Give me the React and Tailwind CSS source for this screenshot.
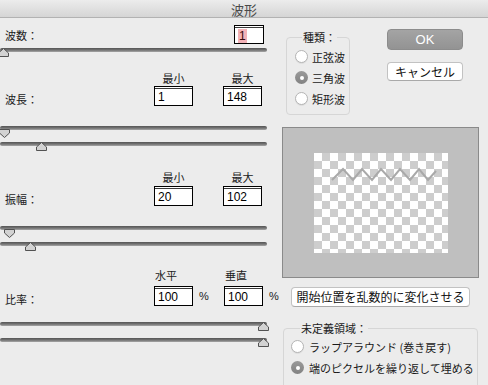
import React from "react";

const jp = "font-['Noto_Sans_CJK_JP',sans-serif]";
const num = "font-['Liberation_Sans',sans-serif]";

function Thumb({ dir, pos }) {
  return (
    <svg
      width="11"
      height="9"
      viewBox="0 0 11 9"
      className={`absolute ${dir === "up" ? "top-[0px]" : "top-[3px]"} ${pos}`}
    >
      {dir === "up" ? (
        <path d="M5.5 0.5 L10.5 5 V8.5 H0.5 V5 Z" fill="#d2d2d2" stroke="#525252" />
      ) : (
        <path d="M0.5 0.5 H10.5 V4 L5.5 8.5 L0.5 4 Z" fill="#d2d2d2" stroke="#525252" />
      )}
    </svg>
  );
}

function Slider({ dir, pos, className = "" }) {
  return (
    <div className={`relative h-[12px] w-[268px] ${className}`}>
      <div className="mt-[4px] h-[4px] w-[267px] rounded-full bg-linear-to-b from-[#555] via-[#727272] to-[#a8a8a8]" />
      <Thumb dir={dir} pos={pos} />
    </div>
  );
}

function Field({ children, className = "" }) {
  return (
    <div
      className={`flex shrink-0 items-center border border-black bg-white pl-[3px] pt-[2px] text-[12px] leading-none text-black shadow-[inset_0_1px_0_#fff,inset_0_2px_0_#3c3c3c] ${num} ${className}`}
    >
      {children}
    </div>
  );
}

function Radio({ checked, label, className = "" }) {
  return (
    <div className={`flex h-[21px] items-center gap-[4px] ${className}`}>
      {checked ? (
        <div className="flex h-[13px] w-[13px] shrink-0 items-center justify-center rounded-full bg-linear-to-b from-[#9a9a9a] to-[#828282]">
          <div className="h-[4px] w-[4px] rounded-full bg-white" />
        </div>
      ) : (
        <div className="h-[13px] w-[13px] shrink-0 rounded-full border border-[#b4b4b4] bg-white shadow-[0_1px_0_rgba(0,0,0,0.06)]" />
      )}
      <span className="whitespace-nowrap text-[11px] leading-[14px] text-[#1a1a1a]">{label}</span>
    </div>
  );
}

function MinMax({ a, b }) {
  return (
    <div className="flex h-[14px] text-[11px] leading-[14px] text-[#1a1a1a]">
      <div className="w-[154px] shrink-0" />
      <div className="w-[39px] shrink-0 text-center">{a}</div>
      <div className="w-[30px] shrink-0" />
      <div className="w-[39px] shrink-0 text-center">{b}</div>
    </div>
  );
}

function Checker() {
  return (
    <div className="h-[100px] w-[134px] bg-[conic-gradient(#cdcdcd_25%,#ffffff_0_50%,#cdcdcd_0_75%,#ffffff_0)] bg-[length:16px_16px]">
      <svg width="134" height="100" viewBox="0 0 134 100">
        <polyline
          points="18,27 29,16 39,27 48,16 58,27 67,16 77,27 86,16 96,27 105,16 114,27 122,18"
          fill="none"
          stroke="#a9a9a9"
          strokeWidth="2"
        />
      </svg>
    </div>
  );
}

export default function App() {
  return (
    <div className={`h-[385px] w-[488px] overflow-hidden bg-[#ececec] ${jp}`}>
      {/* title bar */}
      <div className="flex h-[18px] items-center justify-center border-b border-[#b2b2b2] bg-linear-to-b from-[#ececec] to-[#d5d5d5] pt-[2px] text-[13px] leading-none text-[#4a4a4a]">
        波形
      </div>

      <div className="flex">
        {/* left column */}
        <div className="w-[268px] shrink-0 text-[#1a1a1a]">
          <div className="mt-[7px] flex h-[19px] items-center">
            <div className="w-[234px] shrink-0 pl-[5px] text-[11px] leading-[14px]">波数：</div>
            <Field className="h-[19px] w-[30px] pl-[1px]">
              <span className="bg-[#f3b2b7] px-[1px] py-[1px] text-[#3a0a0a]">1</span>
            </Field>
          </div>
          <Slider dir="up" pos="left-[-2px]" className="mt-[2px]" />

          <div className="mt-[11px]">
            <MinMax a="最小" b="最大" />
          </div>
          <div className="mt-[1px] flex h-[20px]">
            <div className="w-[154px] shrink-0 self-end pl-[5px] text-[11px] leading-[14px]">波長：</div>
            <Field className="h-[20px] w-[39px]">1</Field>
            <div className="w-[30px] shrink-0" />
            <Field className="h-[20px] w-[39px]">148</Field>
          </div>
          <Slider dir="down" pos="left-[-1px]" className="mt-[20px]" />
          <Slider dir="up" pos="left-[36px]" className="mt-[2px]" />

          <div className="mt-[16px]">
            <MinMax a="最小" b="最大" />
          </div>
          <div className="mt-[2px] flex h-[20px]">
            <div className="w-[154px] shrink-0 self-end pl-[5px] text-[11px] leading-[14px]">振幅：</div>
            <Field className="h-[20px] w-[39px]">20</Field>
            <div className="w-[30px] shrink-0" />
            <Field className="h-[20px] w-[39px]">102</Field>
          </div>
          <Slider dir="down" pos="left-[4px]" className="mt-[20px]" />
          <Slider dir="up" pos="left-[25px]" className="mt-[4px]" />

          <div className="mt-[14px] flex h-[14px] text-[11px] leading-[14px]">
            <div className="w-[154px] shrink-0" />
            <div className="w-[70px] shrink-0 pl-[1px]">水平</div>
            <div className="pl-[1px]">垂直</div>
          </div>
          <div className="mt-[4px] flex h-[20px]">
            <div className="w-[154px] shrink-0 self-end pl-[5px] text-[11px] leading-[14px]">比率：</div>
            <Field className="h-[20px] w-[39px]">100</Field>
            <div className={`w-[31px] shrink-0 pl-[6px] pt-[3px] text-[11px] leading-[14px] ${num}`}>%</div>
            <Field className="h-[20px] w-[39px]">100</Field>
            <div className={`shrink-0 pl-[6px] pt-[3px] text-[11px] leading-[14px] ${num}`}>%</div>
          </div>
          <Slider dir="up" pos="left-[258px]" className="mt-[16px]" />
          <Slider dir="up" pos="left-[258px]" className="mt-[2px]" />
        </div>

        {/* right column */}
        <div className="w-[220px] shrink-0">
          <div className="flex">
            <fieldset className="ml-[18px] mt-[12px] w-[64px] rounded-[4px] border border-[#d6d6d6] pb-[5px]">
              <legend className="ml-[15px] px-[1px] text-[11px] leading-[14px] text-[#1a1a1a]">種類：</legend>
              <div className="pt-[2px]">
                <Radio label="正弦波" className="ml-[8px]" />
                <Radio checked label="三角波" className="ml-[8px]" />
                <Radio label="矩形波" className="ml-[8px]" />
              </div>
            </fieldset>
            <div className="ml-[37px] flex flex-col">
              <button className={`mt-[11px] h-[21px] w-[76px] rounded-[4px] border border-[#8c8c8c] bg-linear-to-b from-[#a4a4a4] to-[#939393] text-[13px] leading-none text-white ${num}`}>
                OK
              </button>
              <button className="mt-[12px] h-[19px] w-[76px] rounded-[4px] border border-[#c2c2c2] border-b-[#a9a9a9] bg-white text-[12px] leading-none text-[#111]">
                キャンセル
              </button>
            </div>
          </div>

          <div className="ml-[14px] mt-[12px] flex h-[151px] w-[197px] items-center justify-center border border-[#8a8a8a] bg-[#bfbfbf]">
            <Checker />
          </div>

          <button className="ml-[23px] mt-[9px] h-[20px] w-[179px] rounded-[4px] border border-[#c2c2c2] border-b-[#a9a9a9] bg-white text-[12px] leading-none text-[#111]">
            開始位置を乱数的に変化させる
          </button>

          <fieldset className="ml-[15px] mt-[14px] h-[80px] w-[195px] rounded-[4px] border border-[#d6d6d6]">
            <legend className="ml-[16px] px-[1px] text-[11px] leading-[14px] text-[#1a1a1a]">未定義領域：</legend>
            <div className="pt-[1px]">
              <Radio label="ラップアラウンド (巻き戻す)" className="ml-[7px] gap-[5px]" />
              <Radio checked label="端のピクセルを繰り返して埋める" className="ml-[7px] gap-[5px]" />
            </div>
          </fieldset>
        </div>
      </div>
    </div>
  );
}
